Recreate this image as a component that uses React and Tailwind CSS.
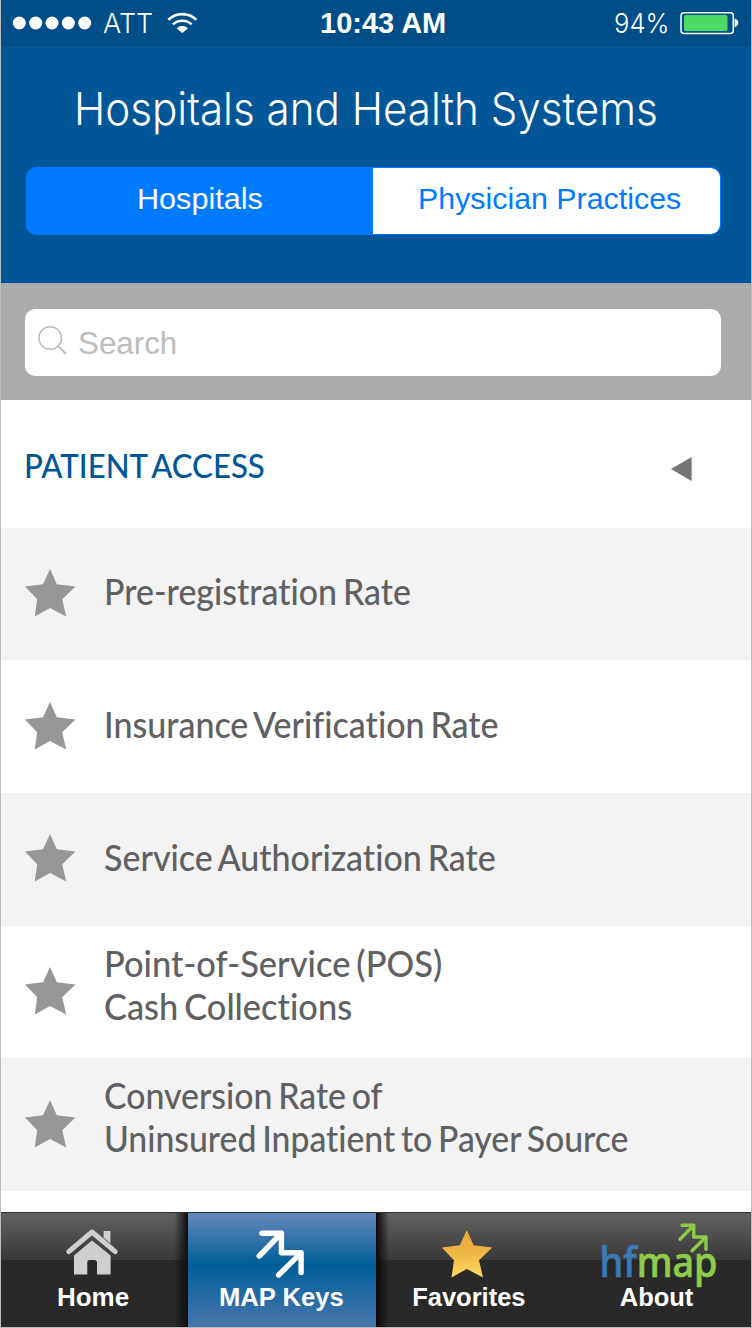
const STAR =
  "M25 0 L31.8 15.2 L50.5 17.6 L37.2 30.3 L41.2 47.5 L25 39 L9.7 47.5 L12.2 30.3 L0 17.6 L18 15.2 Z";

const rows = [
  { lines: [["Pre-registration Rate", "scale-x-[0.917]"]], size: "h-[132px] bg-[#f3f3f3] pb-[7px]", star: "mt-[41px]" },
  { lines: [["Insurance Verification Rate", "scale-x-[0.919]"]], size: "h-[133px] bg-white pb-[7px]", star: "mt-[42px]" },
  { lines: [["Service Authorization Rate", "scale-x-[0.919]"]], size: "h-[133px] bg-[#f3f3f3] pb-[7px]", star: "mt-[41px]" },
  {
    lines: [["Point-of-Service (POS)", "scale-x-[0.932]"], ["Cash Collections", "scale-x-[0.93]"]],
    size: "h-[132px] bg-white pb-[17px]",
    star: "mt-[41px]",
  },
  {
    lines: [["Conversion Rate of", "scale-x-[0.914]"], ["Uninsured Inpatient to Payer Source", "scale-x-[0.912]"]],
    size: "h-[133px] bg-[#f3f3f3] pb-[17px]",
    star: "mt-[42px]",
  },
];

function StatusBar() {
  return (
    <div className="flex h-[47px] items-center bg-[#004e87] text-white">
      <div className="flex w-[319px] items-center">
        <svg className="ml-[11px] h-[47px] w-[91px] shrink-0" viewBox="12 0 91 47" fill="#fff">
          <circle cx="19.3" cy="23" r="6.5" />
          <circle cx="35.7" cy="23" r="6.5" />
          <circle cx="52" cy="23" r="6.5" />
          <circle cx="68.4" cy="23" r="6.5" />
          <circle cx="84.7" cy="23" r="6.5" />
        </svg>
        <span className="w-[63px] font-['Inter',sans-serif] text-[27px] font-light leading-[47px]">ATT</span>
        <svg className="h-[47px] w-[32px] shrink-0" viewBox="166 0 32 47" fill="none" stroke="#fff" strokeWidth="2.6">
          <path d="M168.3 19.8 A20 20 0 0 1 196.3 19.8" />
          <path d="M173 24.4 A13.6 13.6 0 0 1 191.6 24.4" />
          <path d="M182.3 33 L176.6 28.4 A8 8 0 0 1 188 28.4 Z" fill="#fff" stroke="none" />
        </svg>
      </div>
      <span className="w-[294px] whitespace-nowrap font-['Liberation_Sans',Arial,sans-serif] text-[29px] font-bold leading-[47px]">
        10:43 AM
      </span>
      <span className="w-[65px] origin-left scale-x-[0.93] whitespace-nowrap font-['Inter',sans-serif] text-[27.5px] font-light leading-[47px]">
        94%
      </span>
      <svg className="h-[47px] w-[62px] shrink-0" viewBox="679 0 62 47" fill="none">
        <rect x="681" y="12.8" width="52.3" height="20.6" rx="3" stroke="#fff" strokeWidth="1.5" />
        <rect x="684" y="15" width="43.5" height="16" rx="1.8" fill="#4cd964" />
        <path d="M734.6 18.6 Q738.6 20 738.3 23 Q738 26 734.6 27.4 Z" fill="#fff" />
      </svg>
    </div>
  );
}

function Header() {
  return (
    <div className="h-[236px] bg-[#005696] pt-8">
      <h1 className="ml-[73px] origin-left scale-x-[0.947] whitespace-nowrap font-['Inter',sans-serif] text-[44.5px] font-light leading-[60px] text-white">
        Hospitals and Health Systems
      </h1>
      <div className="ml-[25px] mt-7 flex h-[68px] w-[695px] overflow-hidden rounded-[10px] border border-[#007aff] bg-[#007aff] font-['Liberation_Sans',Arial,sans-serif] text-[30px]">
        <div className="w-[346px] pl-[110px] leading-[62px] text-white">
          <span className="inline-block origin-left scale-x-[1.02]">Hospitals</span>
        </div>
        <div className="flex-1 rounded-r-[9px] bg-white pl-[45px] leading-[62px] text-[#007aff]">
          <span className="inline-block origin-left scale-x-[1.012] whitespace-nowrap">Physician Practices</span>
        </div>
      </div>
    </div>
  );
}

function SearchBar() {
  return (
    <div className="h-[117px] bg-[#a9abad] pl-6 pt-[26px]">
      <div className="flex h-[67px] w-[696px] rounded-[10px] bg-white">
        <svg className="h-[67px] w-[53px] shrink-0" viewBox="25 309 53 67" fill="none" stroke="#bdbdbd" strokeWidth="1.5">
          <circle cx="50.2" cy="338" r="11.3" />
          <path d="M58.2 346 L66 354" strokeWidth="2" />
        </svg>
        <span className="origin-left scale-x-[1.01] font-['Liberation_Sans',Arial,sans-serif] text-[31px] leading-[69px] text-[#bdbdbd]">
          Search
        </span>
      </div>
    </div>
  );
}

function List() {
  return (
    <div className="font-['Lato',sans-serif] [font-variant-ligatures:none] [word-spacing:-3px]">
      <div className="flex h-32 items-center justify-between bg-white pl-[23px] pr-[59px]">
        <h2 className="mt-[3px] origin-left scale-x-[0.945] whitespace-nowrap text-[33px] font-medium text-[#005696]">PATIENT ACCESS</h2>
        <svg className="mt-[10px] h-6 w-[21px]" viewBox="0 0 21 24">
          <path d="M0 12 L20.6 0 V24 Z" fill="#727476" />
        </svg>
      </div>
      {rows.map((row) => (
        <div key={row.lines[0][0]} className={"flex items-center " + row.size}>
          <svg className={"ml-6 h-12 w-[51px] shrink-0 self-start " + row.star} viewBox="0 0 51 48">
            <path d={STAR} fill="#979797" />
          </svg>
          <div className="ml-7 text-[37px] font-medium leading-[43px] text-[#5f6062]">
            {row.lines.map(([text, scale]) => (
              <div key={text} className={"origin-left whitespace-nowrap " + scale}>
                <span>{text}</span>
              </div>
            ))}
          </div>
        </div>
      ))}
    </div>
  );
}

function Tab({ className, viewBox, label, labelClass, children }) {
  return (
    <div className={"flex h-full flex-col items-center " + className}>
      <svg className="h-[71px] w-full shrink-0 overflow-visible" viewBox={viewBox}>
        {children}
      </svg>
      <span className={"whitespace-nowrap text-[26px] leading-[26px] " + labelClass}>{label}</span>
    </div>
  );
}

function TabBar() {
  return (
    <div className="flex h-[115px] border-t border-[#2e2e2e] bg-[linear-gradient(#616161_0px,#393939_47px,#292929_47px)] font-['Liberation_Sans',Arial,sans-serif] font-bold text-white">
      <Tab
        className="w-[187px] bg-[linear-gradient(to_right,transparent_173px,#111_186px)]"
        viewBox="1 1213 187 71"
        label="Home"
        labelClass="pr-[3px]"
      >
        <path d="M68.8 1251.6 L92 1232 L115.2 1251.6" fill="none" stroke="#cfcfcf" strokeWidth="5" strokeLinejoin="round" strokeLinecap="round" />
        <path
          d="M103.6 1231 H110.4 V1243.6 L103.6 1237.6 Z M74 1255.6 L92 1240.4 L110.6 1255.6 V1274.6 H97 V1262.5 Q97 1260 94.5 1260 H89.8 Q87.3 1260 87.3 1262.5 V1274.6 H74 Z"
          fill="#cfcfcf"
        />
      </Tab>
      <Tab
        className="w-[188px] bg-[linear-gradient(#6689ba_0%,#005e98_45%,#4876ac_100%)]"
        viewBox="188 1213 188 71"
        label="MAP Keys"
        labelClass="scale-x-[0.985] pr-[1px]"
      >
        <path
          d="M262 1233.2 H281.4 V1252.8 H301.1 V1272.4 M259.3 1256 L281.4 1233.2 M278.6 1275 L301.1 1252.8"
          fill="none"
          stroke="#fff"
          strokeWidth="5.4"
          strokeLinecap="round"
          strokeLinejoin="round"
        />
      </Tab>
      <Tab
        className="w-[187px] bg-[linear-gradient(to_right,#080808_0px,transparent_13px)]"
        viewBox="376 1213 187 71"
        label="Favorites"
        labelClass="scale-x-[0.98] pr-[2px]"
      >
        <defs>
          <linearGradient id="gold" x1="0" y1="0" x2="0" y2="1">
            <stop offset="0" stopColor="#eaa63a" />
            <stop offset="0.45" stopColor="#edb345" />
            <stop offset="1" stopColor="#ffdc5c" />
          </linearGradient>
        </defs>
        <path d={STAR} transform="translate(441.8 1230)" fill="url(#gold)" />
      </Tab>
      <Tab className="w-[188px]" viewBox="563 1213 188 71" label="About" labelClass="relative scale-x-[0.98] pr-[1px]">
        <text
          x="599.5"
          y="1277"
          textLength="118"
          lengthAdjust="spacingAndGlyphs"
          fontFamily="'Noto Sans', sans-serif"
          fontWeight="500"
          fontSize="42"
          fill="#3a7bb5"
          stroke="#3a7bb5"
          strokeWidth="0.7"
          strokeLinejoin="round"
        >
          hf
          <tspan fill="#8fcb4b" stroke="#8fcb4b">map</tspan>
        </text>
        <path
          d="M682 1225.3 H693.8 V1237 H706 V1249.3 M680 1239.2 L693.8 1225.3 M692 1250.8 L706 1237"
          fill="none"
          stroke="#8fcb4b"
          strokeWidth="3.4"
          strokeLinecap="round"
          strokeLinejoin="round"
        />
      </Tab>
    </div>
  );
}

export default function App() {
  return (
    <div className="flex h-[1328px] w-[752px] flex-col overflow-hidden border-x border-b border-[#bcbcbc] bg-white">
      <StatusBar />
      <Header />
      <SearchBar />
      <List />
      <div className="mt-auto">
        <TabBar />
      </div>
    </div>
  );
}
